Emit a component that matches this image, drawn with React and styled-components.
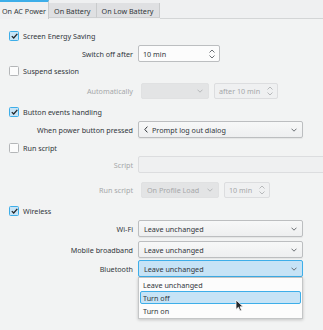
import styled, { createGlobalStyle } from "styled-components";

const Global = createGlobalStyle`
  html, body {
    margin: 0;
    padding: 0;
    background: #eff0f1;
  }
  body {
    font-family: "Noto Sans", "DejaVu Sans", sans-serif;
    font-size: 7.2px;
    color: #31363b;
    width: 323px;
    height: 330px;
    overflow: hidden;
  }
`;

const Page = styled.div`
  width: 323px;
  height: 330px;
  overflow: hidden;
  display: flex;
  flex-direction: column;
`;

const TabBar = styled.div`
  display: flex;
  height: 19px;
  flex-shrink: 0;
`;

const Tab = styled.div`
  height: ${(p) => (p.$active ? "19px" : "15px")};
  margin-top: ${(p) => (p.$active ? "0" : "3px")};
  padding: 0 ${(p) => p.$pad || 5}px;
  display: flex;
  align-items: center;
  box-sizing: border-box;
  white-space: nowrap;
  background: ${(p) => (p.$active ? "#eff0f1" : "#dfe0e2")};
  border-top: ${(p) => (p.$active ? "2px solid #3daee9" : "none")};
  border-right: 1px solid #c9cbcc;
  border-bottom: ${(p) => (p.$active ? "none" : "1px solid #cfd1d2")};
  padding-top: ${(p) => (p.$active ? "0" : "1px")};
`;

const TabFill = styled.div`
  flex: 1;
  border-bottom: 1px solid #d3d5d6;
`;

const Panel = styled.div`
  flex: 1;
  background: #f2f3f3;
  padding-top: 8px;
  display: flex;
  flex-direction: column;
`;

const CheckRow = styled.label`
  display: flex;
  align-items: center;
  gap: 4px;
  height: 17px;
  padding-left: 9px;
  margin-top: ${(p) => p.$mt || 0}px;
`;

const Box = styled.span`
  width: 8px;
  height: 8px;
  border-radius: 1.5px;
  border: 1px solid ${(p) => (p.$checked ? "#3daee9" : "#b4b6b8")};
  background: ${(p) => (p.$checked ? "#c8e4f6" : "#fcfcfc")};
  display: flex;
  align-items: center;
  justify-content: center;
`;

const FormRow = styled.div`
  display: grid;
  grid-template-columns: 133px auto;
  column-gap: ${(p) => p.$gap ?? 5}px;
  align-items: center;
  height: 17px;
  margin-top: ${(p) => p.$mt || 0}px;
`;

const Label = styled.span`
  text-align: right;
  white-space: nowrap;
  color: ${(p) => (p.$disabled ? "#a5a7a9" : "#31363b")};
`;

const Fields = styled.div`
  display: flex;
  gap: 5px;
  align-items: center;
  height: 100%;
`;

const Combo = styled.div`
  position: relative;
  box-sizing: border-box;
  width: ${(p) => p.$w}px;
  height: ${(p) => p.$h || 17}px;
  border-radius: 2px;
  display: flex;
  align-items: center;
  gap: 4px;
  padding: 0 5px;
  white-space: nowrap;
  border: 1px solid
    ${(p) => (p.$focus ? "#3daee9" : p.$disabled ? "#e0e1e2" : "#bcbec0")};
  background: ${(p) =>
    p.$focus
      ? "#c6e3f6"
      : p.$disabled
      ? "#e3e4e5"
      : "linear-gradient(#f7f8f8, #eeeff0)"};
  color: ${(p) => (p.$disabled ? "#a5a7a9" : "#31363b")};
  box-shadow: ${(p) =>
    p.$disabled ? "none" : "0 1px 1px rgba(0,0,0,0.06)"};
`;

const Spin = styled.div`
  box-sizing: border-box;
  width: ${(p) => p.$w}px;
  height: ${(p) => p.$h || 17}px;
  border-radius: 2px;
  display: flex;
  align-items: center;
  padding: 0 4px;
  border: 1px solid ${(p) => (p.$disabled ? "#dcdddf" : "#bcbec0")};
  background: ${(p) => (p.$disabled ? "#eff0f1" : "#fcfcfc")};
  color: ${(p) => (p.$disabled ? "#a5a7a9" : "#31363b")};
  white-space: nowrap;
`;

const LineEdit = styled.div`
  box-sizing: border-box;
  width: 200px;
  height: 17px;
  border-radius: 2px;
  border: 1px solid #dcdddf;
  background: #eff0f1;
`;

const Grow = styled.span`
  flex: 1;
`;

const Popup = styled.div`
  position: absolute;
  left: -1px;
  top: 16px;
  width: 165px;
  box-sizing: border-box;
  background: #fcfcfc;
  border: 1px solid #c4c6c7;
  box-shadow: 0 1px 3px rgba(0, 0, 0, 0.2);
  padding: 0 1px 1px;
  z-index: 2;
`;

const Item = styled.div`
  height: 13px;
  box-sizing: border-box;
  display: flex;
  align-items: center;
  padding: 0 2px;
  border-radius: 2px;
  border: 1px solid ${(p) => (p.$hover ? "#3daee9" : "transparent")};
  background: ${(p) => (p.$hover ? "#c6e3f6" : "transparent")};
  color: #31363b;
`;

const Cursor = styled.svg`
  position: absolute;
  left: 96px;
  top: 21px;
  z-index: 3;
`;

const Check = () => (
  <svg width="7" height="6" viewBox="0 0 7 6">
    <path d="M0.8 3.1 L2.7 5 L6.3 0.9" fill="none" stroke="#232629" strokeWidth="1.3" />
  </svg>
);

const Chevron = ({ color = "#5b6065" }) => (
  <svg width="6" height="4" viewBox="0 0 6 4">
    <path d="M0.5 0.7 L3 3.2 L5.5 0.7" fill="none" stroke={color} strokeWidth="0.9" />
  </svg>
);

const UpDown = ({ color = "#5b6065" }) => (
  <svg width="6" height="10" viewBox="0 0 6 10">
    <path d="M0.5 3.5 L3 1 L5.5 3.5 M0.5 6.5 L3 9 L5.5 6.5" fill="none" stroke={color} strokeWidth="0.9" />
  </svg>
);

const LeftArrow = () => (
  <svg width="4" height="7" viewBox="0 0 4 7">
    <path d="M3.4 0.6 L0.8 3.5 L3.4 6.4" fill="none" stroke="#31363b" strokeWidth="1" />
  </svg>
);

const CheckBox = ({ checked, children, mt }) => (
  <CheckRow $mt={mt}>
    <Box $checked={checked}>{checked && <Check />}</Box>
    {children}
  </CheckRow>
);

export default function App() {
  return (
    <Page>
      <Global />
      <TabBar>
        <Tab $active $pad={2}>On AC Power</Tab>
        <Tab>On Battery</Tab>
        <Tab>On Low Battery</Tab>
        <TabFill />
      </TabBar>
      <Panel>
        <CheckBox checked>Screen Energy Saving</CheckBox>
        <FormRow $mt={1}>
          <Label>Switch off after</Label>
          <Spin $w={82}>
            <Grow>10 min</Grow>
            <UpDown />
          </Spin>
        </FormRow>

        <CheckBox>Suspend session</CheckBox>
        <FormRow $mt={3} $gap={8}>
          <Label $disabled>Automatically</Label>
          <Fields>
            <Combo $w={68} $h={16} $disabled>
              <Grow />
              <Chevron color="#b0b2b4" />
            </Combo>
            <Spin $w={64} $h={16} $disabled>
              <Grow>after 10 min</Grow>
              <UpDown color="#b0b2b4" />
            </Spin>
          </Fields>
        </FormRow>

        <CheckBox checked mt={4}>Button events handling</CheckBox>
        <FormRow $mt={1}>
          <Label>When power button pressed</Label>
          <Combo $w={165}>
            <LeftArrow />
            <Grow>Prompt log out dialog</Grow>
            <Chevron />
          </Combo>
        </FormRow>

        <CheckBox mt={1}>Run script</CheckBox>
        <FormRow>
          <Label $disabled>Script</Label>
          <LineEdit />
        </FormRow>
        <FormRow $mt={8} $gap={8}>
          <Label $disabled>Run script</Label>
          <Fields>
            <Combo $w={78} $h={16} $disabled>
              <Grow>On Profile Load</Grow>
              <Chevron color="#b0b2b4" />
            </Combo>
            <Spin $w={46} $h={16} $disabled>
              <Grow>10 min</Grow>
              <UpDown color="#b0b2b4" />
            </Spin>
          </Fields>
        </FormRow>

        <CheckBox checked mt={4}>Wireless</CheckBox>
        <FormRow $mt={1}>
          <Label>Wi-Fi</Label>
          <Combo $w={165}>
            <Grow>Leave unchanged</Grow>
            <Chevron />
          </Combo>
        </FormRow>
        <FormRow $mt={4}>
          <Label>Mobile broadband</Label>
          <Combo $w={165}>
            <Grow>Leave unchanged</Grow>
            <Chevron />
          </Combo>
        </FormRow>
        <FormRow $mt={2}>
          <Label>Bluetooth</Label>
          <Combo $w={165} $focus>
            <Grow>Leave unchanged</Grow>
            <Chevron />
            <Popup>
              <Item>Leave unchanged</Item>
              <Item $hover>Turn off</Item>
              <Item>Turn on</Item>
              <Cursor width="9" height="13" viewBox="0 0 9 13">
                <path d="M1 1 L1 10.5 L3.4 8.3 L5 12 L6.6 11.3 L5 7.8 L8.2 7.8 Z" fill="#232629" stroke="#fcfcfc" strokeWidth="0.8" />
              </Cursor>
            </Popup>
          </Combo>
        </FormRow>
      </Panel>
    </Page>
  );
}
